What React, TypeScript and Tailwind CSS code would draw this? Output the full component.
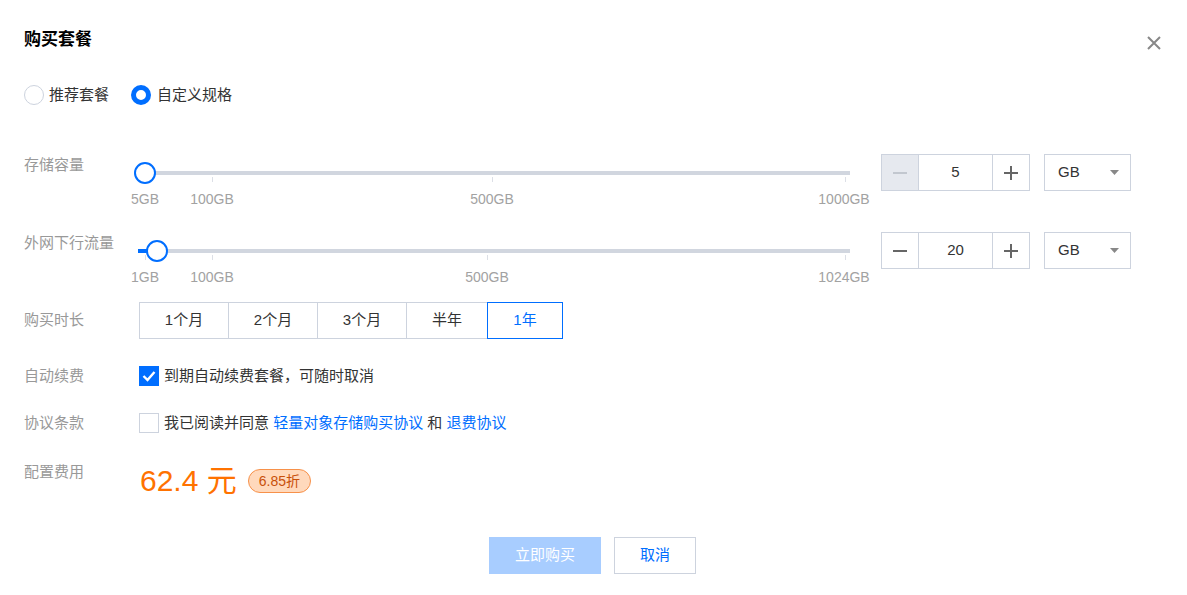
import React from "react";

interface Mark {
  at: number;
  text: string;
}

interface SliderProps {
  thumb: number;
  fill: boolean;
  ticks: number[];
  marks: Mark[];
}

const Slider: React.FC<SliderProps> = ({ thumb, fill, ticks, marks }) => {
  return (
    <div className="relative w-[711px] h-[60px]">
      {/* track */}
      <div className="absolute left-0 top-[17px] h-[4px] w-[711px] bg-[#d1d6df]" />
      {fill && (
        <div
          className="absolute left-[-1px] top-[17px] h-[4px] bg-[#006eff]"
          style={{ width: thumb + 1 }}
        />
      )}
      {ticks.map((t) => (
        <div
          key={t}
          className="absolute top-[23px] h-[5px] w-px bg-[#dcdfe6]"
          style={{ left: t }}
        />
      ))}
      {marks.map((m) => (
        <span
          key={m.text}
          className="absolute top-[36px] -translate-x-1/2 text-[14px] leading-[18px] text-[#a2a2a2] whitespace-nowrap"
          style={{ left: m.at }}
        >
          {m.text}
        </span>
      ))}
      {/* thumb */}
      <div
        className="absolute top-[8px] h-[22px] w-[22px] -translate-x-1/2 rounded-full border-2 border-[#006eff] bg-white"
        style={{ left: thumb }}
      />
    </div>
  );
};

const Stepper: React.FC<{ value: string; minusDisabled?: boolean }> = ({
  value,
  minusDisabled,
}) => (
  <div className="flex h-[37px] w-[149px] border border-[#cdd3de]">
    <div
      className={
        minusDisabled
          ? "flex w-[37px] items-center justify-center border-r border-[#cdd3de] bg-[#e6e9ef]"
          : "flex w-[37px] items-center justify-center border-r border-[#cdd3de] bg-white"
      }
    >
      <div
        className={
          minusDisabled ? "h-[2px] w-[14px] bg-[#c2c7cf]" : "h-[2px] w-[14px] bg-[#666]"
        }
      />
    </div>
    <div className="flex w-[74px] items-center justify-center border-r border-[#cdd3de] text-[15px] text-[#333]">
      {value}
    </div>
    <div className="flex flex-1 items-center justify-center">
      <svg width="14" height="14" viewBox="0 0 14 14">
        <path d="M7 0v14M0 7h14" stroke="#666" strokeWidth="2" />
      </svg>
    </div>
  </div>
);

const UnitSelect: React.FC = () => (
  <div className="ml-[14px] flex h-[37px] w-[87px] items-center justify-between border border-[#cdd3de] pl-[13px] pr-[11px] text-[15px] text-[#333]">
    <span>GB</span>
    <svg width="9" height="5" viewBox="0 0 9 5">
      <path d="M0 0h9L4.5 5z" fill="#888" />
    </svg>
  </div>
);

const durations = [
  { label: "1个月", w: "w-[90px]" },
  { label: "2个月", w: "w-[90px]" },
  { label: "3个月", w: "w-[90px]" },
  { label: "半年", w: "w-[82px]" },
  { label: "1年", w: "w-[76px]" },
];

export default function App() {
  return (
    <div className="h-[595px] w-[1187px] bg-white font-['Liberation_Sans','Noto_Sans_CJK_SC',sans-serif] text-[15px] text-[#333]">
      <div className="pl-[24px]">
        {/* header */}
        <div className="flex items-start justify-between pt-[29px] pr-[26px]">
          <h2 className="text-[17px] font-bold leading-[22px] text-black">购买套餐</h2>
          <svg width="14" height="14" viewBox="0 0 14 14" className="mt-[7px]">
            <path d="M1 1l12 12M13 1L1 13" stroke="#888" strokeWidth="2" />
          </svg>
        </div>

        {/* type radios */}
        <div className="mt-[34px] flex h-[20px] items-center">
          <div className="h-[20px] w-[20px] rounded-full border border-[#cdd3de]" />
          <span className="ml-[5px] leading-[20px]">推荐套餐</span>
          <div className="ml-[22px] h-[20px] w-[20px] rounded-full border-[5px] border-[#006eff] bg-white" />
          <span className="ml-[6px] leading-[20px]">自定义规格</span>
        </div>

        {/* storage */}
        <div className="mt-[49px] flex h-[78px] items-start">
          <div className="w-[115px] leading-[22px] text-[#999]">存储容量</div>
          <Slider
            thumb={6}
            fill={false}
            ticks={[73, 353, 706]}
            marks={[
              { at: 6, text: "5GB" },
              { at: 73, text: "100GB" },
              { at: 353, text: "500GB" },
              { at: 705, text: "1000GB" },
            ]}
          />
          <div className="ml-[31px] flex">
            <Stepper value="5" minusDisabled />
            <UnitSelect />
          </div>
        </div>

        {/* traffic */}
        <div className="flex h-[70px] items-start">
          <div className="w-[115px] leading-[22px] text-[#999]">外网下行流量</div>
          <Slider
            thumb={18}
            fill
            ticks={[6, 73, 348, 706]}
            marks={[
              { at: 6, text: "1GB" },
              { at: 73, text: "100GB" },
              { at: 348, text: "500GB" },
              { at: 705, text: "1024GB" },
            ]}
          />
          <div className="ml-[31px] flex">
            <Stepper value="20" />
            <UnitSelect />
          </div>
        </div>

        {/* duration */}
        <div className="flex items-start">
          <div className="w-[115px] pt-[7px] leading-[22px] text-[#999]">购买时长</div>
          <div className="flex">
            {durations.map((d, i) => {
              const active = i === durations.length - 1;
              return (
                <div
                  key={d.label}
                  className={
                    (i > 0 ? "-ml-px " : "") +
                    d.w +
                    (active
                      ? " relative z-10 flex h-[37px] items-center justify-center border border-[#006eff] text-[#006eff]"
                      : " flex h-[37px] items-center justify-center border border-[#cdd3de] text-[#333]")
                  }
                >
                  {d.label}
                </div>
              );
            })}
          </div>
        </div>

        {/* auto renew */}
        <div className="mt-[27px] flex h-[20px] items-center">
          <div className="w-[115px] leading-[22px] text-[#999]">自动续费</div>
          <div className="flex h-[20px] w-[20px] items-center justify-center bg-[#006eff]">
            <svg width="14" height="12" viewBox="0 0 14 12">
              <path d="M1.5 6l4 4L12.5 2" stroke="#fff" strokeWidth="2.4" fill="none" />
            </svg>
          </div>
          <span className="ml-[5px]">到期自动续费套餐，可随时取消</span>
        </div>

        {/* agreement */}
        <div className="mt-[27px] flex h-[20px] items-center">
          <div className="w-[115px] leading-[22px] text-[#999]">协议条款</div>
          <div className="h-[20px] w-[20px] border border-[#cdd3de] bg-white" />
          <span className="ml-[5px]">
            我已阅读并同意 <span className="text-[#006eff]">轻量对象存储购买协议</span> 和{" "}
            <span className="text-[#006eff]">退费协议</span>
          </span>
        </div>

        {/* price */}
        <div className="mt-[28px] flex h-[38px] items-start">
          <div className="w-[115px] leading-[22px] text-[#999]">配置费用</div>
          <div className="flex items-center pt-[2px]">
            <span className="pl-px text-[30px] leading-[36px] text-[#ff7200]">62.4 元</span>
            <span className="ml-[11px] flex h-[24px] items-center rounded-full border border-[#f7914a] bg-[#ffd9bc] px-[10px] text-[14px] text-[#c8500a]">
              6.85折
            </span>
          </div>
        </div>
      </div>

      {/* footer */}
      <div className="mt-[38px] flex justify-center gap-[13px] pr-[2px]">
        <button className="h-[37px] w-[112px] bg-[#a8cdff] text-[15px] text-white">立即购买</button>
        <button className="h-[37px] w-[82px] border border-[#cdd3de] bg-white text-[15px] text-[#006eff]">
          取消
        </button>
      </div>
    </div>
  );
}
